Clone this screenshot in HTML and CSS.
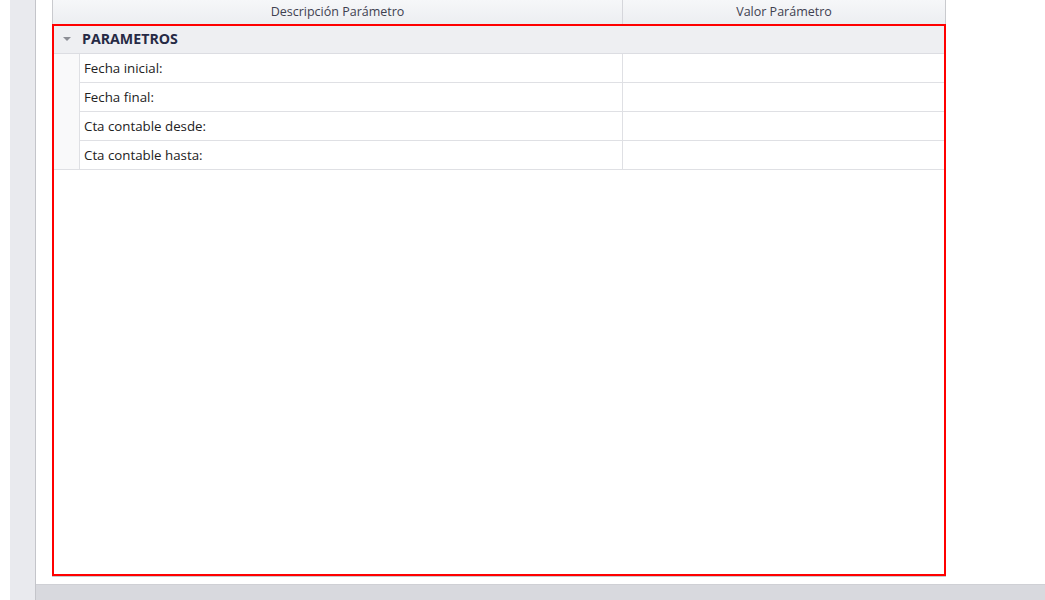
FILE: index.html
```html
<!DOCTYPE html>
<html lang="es">
<head>
<meta charset="utf-8">
<title>Parámetros</title>
<link rel="stylesheet" href="styles.css">
</head>
<body>
<div class="app">
  <div class="gutter"></div>
  <div class="strip"></div>
  <div class="main">
    <div class="content">
      <div class="grid">
        <div class="grid-head">
          <div class="hcell hdesc">Descripción Parámetro</div>
          <div class="hcell hval">Valor Parámetro</div>
        </div>
        <div class="grid-body">
          <div class="group-row">
            <span class="caret"></span>
            <span class="group-title">PARAMETROS</span>
          </div>
          <div class="row">
            <div class="indent"></div>
            <div class="cell desc">Fecha inicial:</div>
            <div class="cell val"></div>
          </div>
          <div class="row">
            <div class="indent"></div>
            <div class="cell desc">Fecha final:</div>
            <div class="cell val"></div>
          </div>
          <div class="row">
            <div class="indent"></div>
            <div class="cell desc">Cta contable desde:</div>
            <div class="cell val"></div>
          </div>
          <div class="row last">
            <div class="indent"></div>
            <div class="cell desc">Cta contable hasta:</div>
            <div class="cell val"></div>
          </div>
        </div>
      </div>
    </div>
    <div class="statusbar"></div>
  </div>
</div>
</body>
</html>
```
FILE: styles.css
```css
html, body {
  margin: 0;
  padding: 0;
  background: #ffffff;
}
body {
  font-family: "Open Sans", "Noto Sans", sans-serif;
  font-size: 12px;
  color: #222222;
}
.app {
  display: flex;
  width: 1045px;
  height: 600px;
  overflow: hidden;
}
.gutter {
  width: 10px;
  background: #ffffff;
}
.strip {
  width: 25px;
  background: #e9eaee;
  border-right: 1px solid #c4c5ca;
}
.main {
  flex: 1;
  display: flex;
  flex-direction: column;
}
.content {
  flex: 1;
  padding-left: 16px;
  padding-bottom: 8px;
}
.statusbar {
  height: 16px;
  background: #d8d9de;
  border-top: 1px solid #cfd0d5;
  box-sizing: border-box;
}
.grid {
  width: 894px;
  height: 576px;
  display: flex;
  flex-direction: column;
}
.grid-head {
  display: flex;
  height: 24px;
  border-left: 1px solid #c9cace;
  border-right: 1px solid #c9cace;
  background: linear-gradient(#f6f7f9, #eceef1);
  color: #3f4150;
  font-size: 12.5px;
}
.hcell {
  display: flex;
  align-items: center;
  justify-content: center;
  line-height: 1;
}
.hdesc {
  width: 569px;
  border-right: 1px solid #d5d6db;
}
.hval {
  flex: 1;
}
.grid-body {
  flex: 1;
  border: 2px solid #ff0000;
  box-shadow: 0 1px 0 #c9cace;
}
.group-row {
  height: 28px;
  box-sizing: border-box;
  padding-bottom: 2px;
  background: #eeeff2;
  border-bottom: 1px solid #dcdde2;
  display: flex;
  align-items: center;
}
.caret {
  width: 0;
  height: 0;
  border-left: 4px solid transparent;
  border-right: 4px solid transparent;
  border-top: 4px solid #8c8e95;
  margin-left: 9px;
  margin-right: 11px;
}
.group-title {
  font-weight: bold;
  font-size: 14.2px;
  color: #262a45;
}
.row {
  display: flex;
  height: 29px;
  font-size: 13.3px;
}
.indent {
  width: 25px;
  background: #f9f9fa;
  border-right: 1px solid #dfe0e4;
}
.cell {
  border-bottom: 1px solid #dfe0e4;
  display: flex;
  align-items: center;
}
.row.last .indent {
  border-bottom: 1px solid #dfe0e4;
}
.desc {
  width: 538px;
  padding-left: 4px;
  border-right: 1px solid #dfe0e4;
}
.val {
  flex: 1;
}
```
